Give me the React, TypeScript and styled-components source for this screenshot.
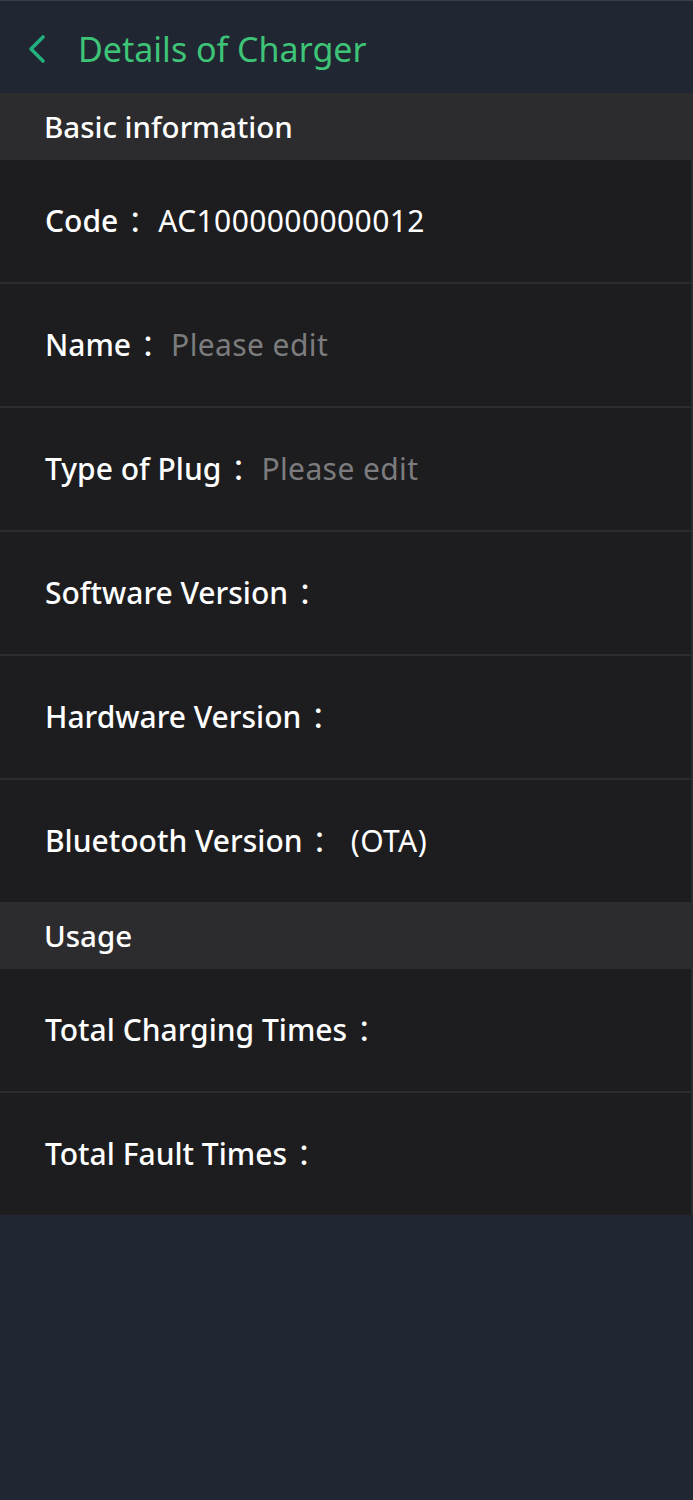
import { createGlobalStyle, styled } from "styled-components";

const GlobalStyle = createGlobalStyle`
  html, body {
    margin: 0;
    padding: 0;
    background: #212633;
  }
  body {
    font-family: "Noto Sans", "Noto Sans CJK SC", sans-serif;
  }
`;

const Page = styled.div`
  display: flex;
  flex-direction: column;
  width: 693px;
  min-height: 1500px;
  background: #212633;
  border-top: 1px solid #3a3f4a;
  box-sizing: border-box;
`;

const Header = styled.div`
  display: flex;
  align-items: center;
  height: 92px;
  padding: 4px 0 0 26px;
  gap: 30px;
  box-sizing: border-box;
`;

const Title = styled.div`
  font-size: 34px;
  color: #3ec477;
`;

const Sheet = styled.div`
  display: flex;
  flex-direction: column;
  width: 691px;
  border-right: 2px solid #2c2c2e;
`;

const SectionTitle = styled.div`
  display: flex;
  align-items: center;
  height: 67px;
  padding-left: 44px;
  background: #2c2c2e;
  color: #ffffff;
  font-size: 29.5px;
  font-weight: 500;
`;

const Row = styled.div<{ last?: boolean }>`
  display: flex;
  align-items: center;
  height: 120px;
  padding: 0 0 2px 45px;
  background: #1d1d1f;
  border-bottom: ${(p) => (p.last ? "none" : "2px solid #2c2c2e")};
  font-size: 30px;
  color: #ffffff;
  white-space: pre;
`;

const Label = styled.span`
  font-weight: 500;
`;

const Colon = styled.span`
  font-family: "Noto Sans CJK TC", sans-serif;
  margin: 0 8px 0 2px;
`;

const Value = styled.span<{ placeholder?: boolean }>`
  color: ${(p) => (p.placeholder ? "#7c7c7e" : "#ffffff")};
  letter-spacing: 0.4px;
`;

const BackIcon = () => (
  <svg width="22" height="30" viewBox="0 0 22 30" fill="none">
    <path
      d="M17 3 L5 15 L17 27"
      stroke="#23b07c"
      strokeWidth="3.6"
      strokeLinecap="round"
      strokeLinejoin="round"
    />
  </svg>
);

type Item = { label: string; value?: string; placeholder?: boolean };

const basic: Item[] = [
  { label: "Code", value: "AC1000000000012" },
  { label: "Name", value: "Please edit", placeholder: true },
  { label: "Type of Plug", value: "Please edit", placeholder: true },
  { label: "Software Version" },
  { label: "Hardware Version" },
  { label: "Bluetooth Version", value: " (OTA)" },
];

const usage: Item[] = [
  { label: "Total Charging Times" },
  { label: "Total Fault Times" },
];

const InfoRows = ({ items }: { items: Item[] }) => (
  <>
    {items.map((item, i) => (
      <Row key={item.label} last={i === items.length - 1}>
        <Label>{item.label}</Label>
        <Colon>：</Colon>
        {item.value && (
          <Value placeholder={item.placeholder}>{item.value}</Value>
        )}
      </Row>
    ))}
  </>
);

export default function App() {
  return (
    <Page>
      <GlobalStyle />
      <Header>
        <BackIcon />
        <Title>Details of Charger</Title>
      </Header>
      <Sheet>
        <SectionTitle>Basic information</SectionTitle>
        <InfoRows items={basic} />
        <SectionTitle>Usage</SectionTitle>
        <InfoRows items={usage} />
      </Sheet>
    </Page>
  );
}
